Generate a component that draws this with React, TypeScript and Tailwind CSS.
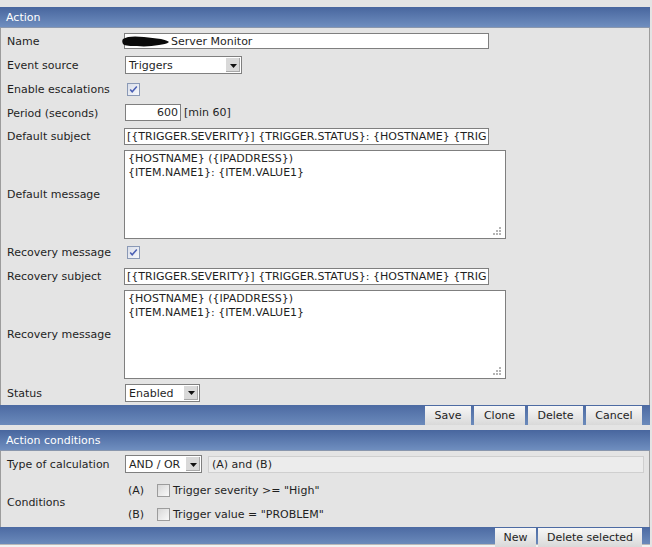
import React from "react";

function Arrow() {
  return (
    <div className="flex h-full w-[16px] items-center justify-center border border-white bg-[#d9d9d9] shadow-[inset_-1px_-1px_0_#a8a8a8]">
      <svg width="7" height="4" viewBox="0 0 7 4" className="mt-[1px]">
        <path d="M0 0h7L3.5 4z" fill="#111" />
      </svg>
    </div>
  );
}

function Select({ value, w }: { value: string; w: string }) {
  return (
    <div className={`flex h-[18px] items-stretch border border-[#7f7f7f] bg-white ${w}`}>
      <div className="flex-1 pl-[3px] pt-[1px] leading-[15px]">{value}</div>
      <Arrow />
    </div>
  );
}

function Check({ on }: { on: boolean }) {
  return (
    <svg width="13" height="13" viewBox="0 0 13 13">
      <defs>
        <linearGradient id={on ? "cbOn" : "cbOff"} x1="0" y1="0" x2="1" y2="1">
          <stop offset="0" stopColor={on ? "#d8dde8" : "#d6d6d6"} />
          <stop offset="1" stopColor={on ? "#f8f9fc" : "#fbfbfb"} />
        </linearGradient>
      </defs>
      <rect x="0.5" y="0.5" width="12" height="12" fill={`url(#${on ? "cbOn" : "cbOff"})`} stroke={on ? "#8a99b6" : "#9c9c9c"} />
      {on && <path d="M3.2 6.4l2 2.4L9.8 3.4" fill="none" stroke="#4a5fb4" strokeWidth="1.5" />}
    </svg>
  );
}

function Grip() {
  return (
    <svg width="9" height="9" viewBox="0 0 9 9" className="absolute bottom-[3px] right-[4px]">
      <g fill="#b4b4b4">
        <rect x="7" y="1" width="2" height="2" />
        <rect x="4" y="4" width="2" height="2" />
        <rect x="7" y="4" width="2" height="2" />
        <rect x="1" y="7" width="2" height="2" />
        <rect x="4" y="7" width="2" height="2" />
        <rect x="7" y="7" width="2" height="2" />
      </g>
    </svg>
  );
}

function TextBox({ text }: { text: string }) {
  return (
    <div className="h-[17px] w-[365px] overflow-hidden whitespace-nowrap border border-[#7f7f7f] bg-white pl-[2px] pt-[1px] leading-[14px]">
      {text}
    </div>
  );
}

function Message() {
  return (
    <div className="relative h-[89px] w-[382px] border border-[#7f7f7f] bg-white pl-[3px] pt-[1px] leading-[14px]">
      <div>{"{HOSTNAME} ({IPADDRESS})"}</div>
      <div>{"{ITEM.NAME1}: {ITEM.VALUE1}"}</div>
      <Grip />
    </div>
  );
}

function Row({ label, h, children }: { label: string; h: string; children?: React.ReactNode }) {
  return (
    <div className={`flex items-center ${h}`}>
      <div className="w-[123px] pl-[6px] pt-[3px]">{label}</div>
      <div className="flex items-center">{children}</div>
    </div>
  );
}

function Btn({ label, w }: { label: string; w: string }) {
  return (
    <div className={`flex h-[19px] items-center justify-center bg-gradient-to-b from-[#f7f7f7] to-[#d9d9d9] pt-[2px] text-[#1e1e1e] ${w}`}>
      {label}
    </div>
  );
}

function Header({ title }: { title: string }) {
  return (
    <div className="flex h-[21px] items-center border-b border-[#8a97ad] bg-gradient-to-b from-[#48669e] to-[#6f8ebf] pl-[6px] pt-[2px] text-white">
      {title}
    </div>
  );
}

const subject = "[{TRIGGER.SEVERITY}] {TRIGGER.STATUS}: {HOSTNAME} {TRIG";

export default function App() {
  return (
    <div className="h-[547px] w-[652px] overflow-hidden bg-[#e4e4e4] pt-[7px] font-['DejaVu_Sans',Verdana,sans-serif] text-[11px] text-[#1f1f1f]">
      <div className="w-[650px]">
        <Header title="Action" />
        <div className="border-x border-[#9c9c9c] bg-[#e4e4e4]">
          <Row label="Name" h="h-[25px]">
            <div className="relative flex h-[16px] w-[365px] items-center border border-[#7f7f7f] bg-white pt-[2px] leading-[14px]">
              <svg width="48" height="11" viewBox="0 0 48 11" className="absolute left-[-3px] top-[2px]">
                <path
                  d="M1 3C5 0 14 0 22 1c6 1 11 1 17 2 4 1 7 2 8 3-2 2-6 2-10 3-7 1-14 2-22 1C9 10 3 10 1 8 0 6 0 4 1 3z"
                  fill="#0a0a0a"
                />
              </svg>
              <span className="pl-[46px]">Server Monitor</span>
            </div>
          </Row>
          <Row label="Event source" h="h-[24px]">
            <div className="pl-[1px]">
              <Select value="Triggers" w="w-[117px]" />
            </div>
          </Row>
          <Row label="Enable escalations" h="h-[24px]">
            <div className="pl-[3px]">
              <Check on />
            </div>
          </Row>
          <Row label="Period (seconds)" h="h-[23px]">
            <div className="flex items-center pl-[1px]">
              <div className="h-[17px] w-[56px] border border-[#7f7f7f] bg-white pr-[2px] pt-[1px] text-right leading-[14px]">600</div>
              <span className="pl-[3px] pt-[2px]">[min 60]</span>
            </div>
          </Row>
          <Row label="Default subject" h="h-[24px]">
            <TextBox text={subject} />
          </Row>
          <Row label="Default message" h="h-[92px]">
            <Message />
          </Row>
          <Row label="Recovery message" h="h-[24px]">
            <div className="pl-[3px]">
              <Check on />
            </div>
          </Row>
          <Row label="Recovery subject" h="h-[24px]">
            <TextBox text={subject} />
          </Row>
          <Row label="Recovery message" h="h-[92px]">
            <Message />
          </Row>
          <Row label="Status" h="h-[25px]">
            <div className="pl-[1px]">
              <Select value="Enabled" w="w-[75px]" />
            </div>
          </Row>
        </div>
        <div className="flex h-[20px] items-start justify-end gap-[3px] bg-gradient-to-b from-[#4c6aa2] to-[#6b8abb] pr-[8px] pt-[1px]">
          <Btn label="Save" w="w-[46px]" />
          <Btn label="Clone" w="w-[51px]" />
          <Btn label="Delete" w="w-[55px]" />
          <Btn label="Cancel" w="w-[56px]" />
        </div>

        <div className="h-[5px]" />

        <Header title="Action conditions" />
        <div className="border-x border-[#9c9c9c] bg-[#e4e4e4]">
          <Row label="Type of calculation" h="h-[26px]">
            <div className="flex items-center gap-[6px] pl-[1px]">
              <Select value="AND / OR" w="w-[77px]" />
              <div className="h-[17px] w-[436px] border border-[#cfcfcf] bg-[#ececec] pl-[3px] pt-[1px] leading-[14px]">(A) and (B)</div>
            </div>
          </Row>
          <div className="flex h-[50px] items-center">
            <div className="w-[123px] pl-[6px] pt-[3px]">Conditions</div>
            <div className="flex flex-col">
              <div className="flex h-[24px] items-center">
                <span className="w-[33px] pl-[4px] pt-[2px]">(A)</span>
                <Check on={false} />
                <span className="pl-[3px] pt-[2px]">Trigger severity &gt;= "High"</span>
              </div>
              <div className="flex h-[24px] items-center">
                <span className="w-[33px] pl-[4px] pt-[2px]">(B)</span>
                <Check on={false} />
                <span className="pl-[3px] pt-[2px]">Trigger value = "PROBLEM"</span>
              </div>
            </div>
          </div>
        </div>
        <div className="flex h-[17px] items-start justify-end gap-[2px] bg-gradient-to-b from-[#4c6aa2] to-[#6b8abb] pr-[8px] pt-[1px]">
          <Btn label="New" w="w-[41px]" />
          <Btn label="Delete selected" w="w-[104px]" />
        </div>
        <div className="h-[3px] border-t border-[#b8b8b8] bg-[#f2f2f2]" />
      </div>
    </div>
  );
}
